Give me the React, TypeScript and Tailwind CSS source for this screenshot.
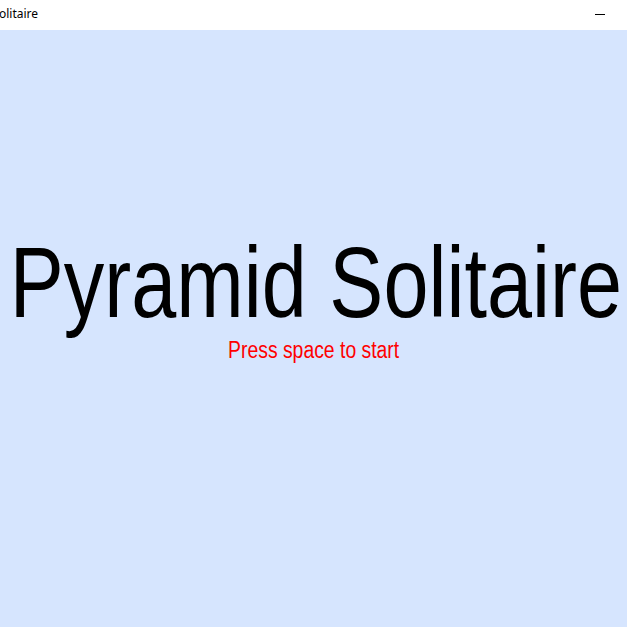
export default function App() {
  return (
    <div className="w-[627px] h-[627px] flex flex-col bg-[#d6e5fe] overflow-hidden">
      <div className="h-[30px] bg-white flex items-center justify-between shrink-0">
        <span className="text-[12px] text-black leading-none ml-[-1px] mt-[-2px]" style={{ fontFamily: '"Noto Sans", "Liberation Sans", sans-serif' }}>
          olitaire
        </span>
        <div className="w-[10px] h-[1px] bg-black mr-[22px] mt-[-2px]" />
      </div>
      <div className="flex flex-col items-center pt-[202px]">
        <div
          className="text-[100px] leading-none text-black whitespace-nowrap scale-x-[0.81] ml-[5px]"
          style={{ fontFamily: '"Liberation Sans", Arial, sans-serif' }}
        >
          Pyramid Solitaire
        </div>
        <div
          className="mt-[7px] text-[23px] leading-none text-[#ff0000] whitespace-nowrap scale-x-[0.842]"
          style={{ fontFamily: '"Liberation Sans", Arial, sans-serif' }}
        >
          Press space to start
        </div>
      </div>
    </div>
  );
}
